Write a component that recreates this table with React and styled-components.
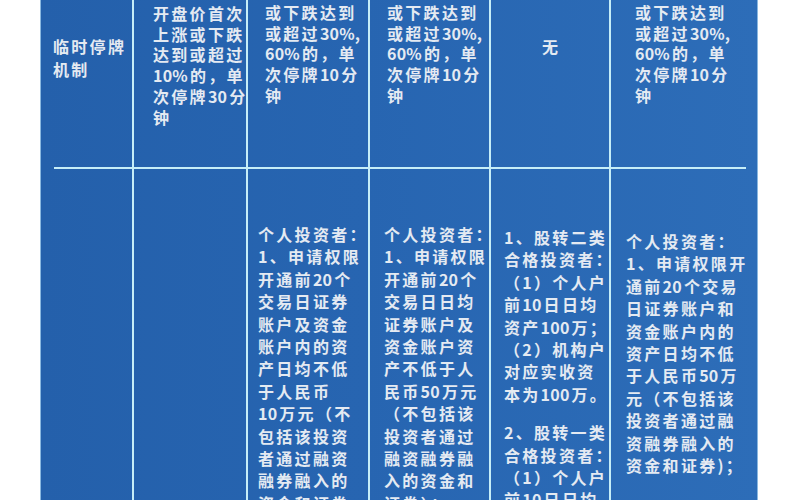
import React from "react"
import styled, { createGlobalStyle } from "styled-components"

const GlobalStyle = createGlobalStyle`
  html, body {
    margin: 0;
    padding: 0;
    background: #ffffff;
  }
  body {
    font-family: "Noto Sans CJK SC", "Noto Sans", "Liberation Sans", sans-serif;
  }
`

const LINE = "#c6eef8"

const Page = styled.div`
  width: 800px;
  height: 500px;
  overflow: hidden;
  background: #ffffff;
`

const Sheet = styled.div`
  width: 718px;
  margin: -40px 0 0 40px;
  box-sizing: border-box;
  background: linear-gradient(90deg, #2460ab 0%, #2765b1 45%, #2d6db8 100%);
  border-left: 1px solid #8ab8e0;
  border-right: 1px solid #8ab8e0;
`

const Row = styled.div`
  display: grid;
  grid-template-columns: 93px 114px 122px 121px 120px 146px;
  height: ${(p) => p.$height}px;
`

const Cell = styled.div`
  box-sizing: border-box;
  border-right: ${(p) => (p.$last ? "none" : `2px solid ${LINE}`)};
  padding-top: ${(p) => p.$top || 0}px;
  padding-left: ${(p) => p.$left || 0}px;
  text-align: ${(p) => (p.$center ? "center" : "left")};
  color: #e4eaf2;
  font-size: 16px;
  font-weight: 700;
  letter-spacing: ${(p) => (p.$center ? 0 : 2.3)}px;
  line-height: ${(p) => p.$lh || 20.7}px;
  overflow: hidden;
`

const Line = styled.div`
  white-space: nowrap;
  min-height: 1em;
`

// digits and latin punctuation sit tighter than the CJK glyphs
const Num = styled.span`
  letter-spacing: 0.2px;
  margin-right: 2px;
`

const Divider = styled.div`
  height: 2px;
  margin: 0 11px 0 13px;
  background: ${LINE};
`

const halted = ["或下跌达到", "或超过30%,", "60%的，单", "次停牌10分", "钟"]

const topRow = [
  { left: 12, top: 75, lh: 23, lines: ["临时停牌", "机制"] },
  { left: 19, top: 43, lines: ["开盘价首次", "上涨或下跌", "达到或超过", "10%的，单", "次停牌30分", "钟"] },
  { left: 17, top: 42, lines: halted },
  { left: 17, top: 42, lines: halted },
  { center: true, top: 76, lines: ["无"] },
  { left: 24, top: 42, lines: halted },
]

const bottomRow = [
  { lines: [] },
  { lines: [] },
  {
    left: 10,
    top: 54,
    lines: [
      "个人投资者：", "1、申请权限", "开通前20个", "交易日证券", "账户及资金", "账户内的资",
      "产日均不低", "于人民币", "10万元（不", "包括该投资", "者通过融资", "融券融入的", "资金和证券",
    ],
  },
  {
    left: 14,
    top: 54,
    lines: [
      "个人投资者：", "1、申请权限", "开通前20个", "交易日日均", "证券账户及", "资金账户资",
      "产不低于人", "民币50万元", "（不包括该", "投资者通过", "融资融券融", "入的资金和", "证券）；",
    ],
  },
  {
    left: 13,
    top: 57,
    lines: [
      "1、股转二类", "合格投资者：", "（1）个人户", "前10日日均", "资产100万；", "（2）机构户",
      "对应实收资", "本为100万。", "", "2、股转一类", "合格投资者：", "（1）个人户", "前10日日均",
    ],
  },
  {
    left: 15,
    top: 61,
    lines: [
      "个人投资者：", "1、申请权限开", "通前20个交易", "日证券账户和", "资金账户内的", "资产日均不低",
      "于人民币50万", "元（不包括该", "投资者通过融", "资融券融入的", "资金和证券)；",
    ],
  },
]

function renderText(text) {
  return text.split(/([0-9%,)]+)/).map((part, i) =>
    /^[0-9%,)]+$/.test(part) ? <Num key={i}>{part}</Num> : part
  )
}

function TableRow({ cells, height, lh }) {
  return (
    <Row $height={height}>
      {cells.map((cell, i) => (
        <Cell
          key={i}
          $last={i === cells.length - 1}
          $top={cell.top}
          $left={cell.left}
          $center={cell.center}
          $lh={cell.lh || lh}
        >
          {cell.lines.map((text, j) => (
            <Line key={j}>{renderText(text)}</Line>
          ))}
        </Cell>
      ))}
    </Row>
  )
}

export default function App() {
  return (
    <Page>
      <GlobalStyle />
      <Sheet>
        <TableRow cells={topRow} height={207} lh={20.7} />
        <Divider />
        <TableRow cells={bottomRow} height={400} lh={22.4} />
      </Sheet>
    </Page>
  )
}
